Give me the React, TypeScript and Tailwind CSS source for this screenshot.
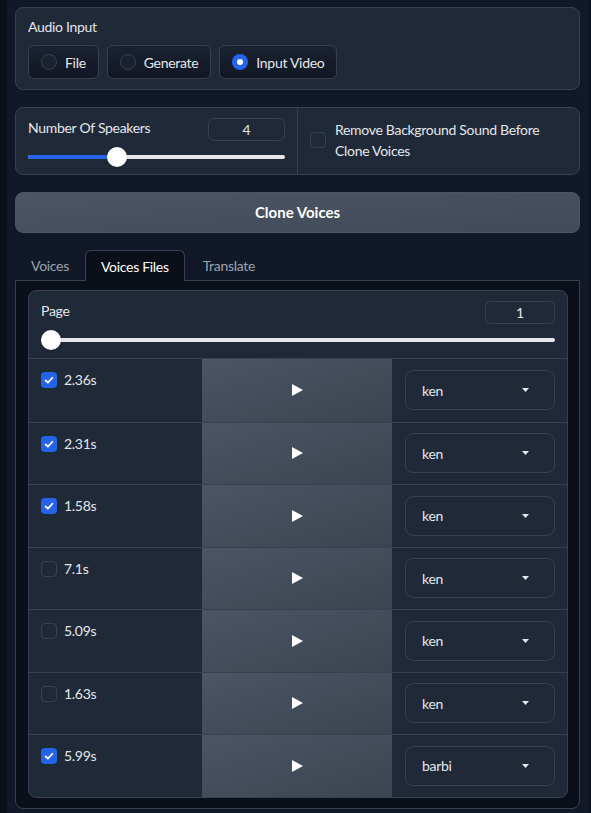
import React from 'react';

const rows = [
  { time: '2.36s', checked: true, voice: 'ken' },
  { time: '2.31s', checked: true, voice: 'ken' },
  { time: '1.58s', checked: true, voice: 'ken' },
  { time: '7.1s', checked: false, voice: 'ken' },
  { time: '5.09s', checked: false, voice: 'ken' },
  { time: '1.63s', checked: false, voice: 'ken' },
  { time: '5.99s', checked: true, voice: 'barbi' },
];

const Checkbox = ({ checked }: { checked: boolean }) =>
  checked ? (
    <span className="flex h-4 w-4 shrink-0 items-center justify-center rounded-[4px] bg-[#2563eb]">
      <svg width="12" height="12" viewBox="0 0 16 16" fill="none" stroke="white" strokeWidth="2.4" strokeLinecap="round" strokeLinejoin="round">
        <path d="M3.5 8.5l3 3 6-6.5" />
      </svg>
    </span>
  ) : (
    <span className="block h-4 w-4 shrink-0 rounded-[4px] border border-[#374151] bg-[#1f2937]" />
  );

const Radio = ({ label, checked }: { label: string; checked?: boolean }) => (
  <div className="flex h-[34px] items-center gap-2 rounded-md border border-[#374151] bg-linear-to-b from-[#1a2130] to-[#111723] pl-3 pr-3 text-[14px] text-[#e5e7eb]">
    {checked ? (
      <span className="flex h-4 w-4 items-center justify-center rounded-full bg-[#2563eb]">
        <span className="h-[6px] w-[6px] rounded-full bg-white" />
      </span>
    ) : (
      <span className="h-4 w-4 rounded-full border border-[#374151] bg-[#1a2130]" />
    )}
    <span>{label}</span>
  </div>
);

const Slider = ({ pos }: { pos: number }) => (
  <div className="relative h-5">
    <div className="absolute left-0 right-0 top-[8px] h-1 rounded-full bg-[#e5e7eb]" />
    <div className="absolute left-0 top-[8px] h-1 rounded-full bg-[#2563eb]" style={{ width: pos }} />
    <div className="absolute top-0 h-5 w-5 rounded-full bg-white shadow" style={{ left: pos - 10 }} />
  </div>
);

export default function App() {
  return (
    <div className="min-h-screen bg-[#0b0f19] pl-[7px] font-['Lato','Noto_Sans',sans-serif] tracking-[-0.3px]">
      <div className="flex min-h-[813px] w-[582px] flex-col gap-[17px] bg-[#111827] pl-2 pr-[9px] pt-[7px]">
        {/* audio input */}
        <div className="rounded-lg border border-[#374151] bg-[#1f2937] px-3 pb-[10px] pt-[9px]">
          <div className="mb-2 text-[14px] leading-5 text-[#e5e7eb]">Audio Input</div>
          <div className="flex gap-2">
            <Radio label="File" />
            <Radio label="Generate" />
            <Radio label="Input Video" checked />
          </div>
        </div>

        {/* speakers */}
        <div className="flex h-[68px] rounded-lg border border-[#374151] bg-[#1f2937]">
          <div className="w-[282px] border-r border-[#374151] px-3 pt-[10px]">
            <div className="flex items-start justify-between">
              <span className="text-[14px] leading-5 text-[#e5e7eb]">Number Of Speakers</span>
              <div className="flex h-[23px] w-[77px] items-center justify-center rounded-md border border-[#374151] bg-[#1f2937] text-[14px] text-[#e5e7eb]">
                4
              </div>
            </div>
            <div className="mt-[6px]">
              <Slider pos={89} />
            </div>
          </div>
          <div className="flex flex-1 items-center gap-[9px] px-3 pb-[3px]">
            <Checkbox checked={false} />
            <span className="text-[14px] leading-[21px] text-[#e5e7eb]">
              Remove Background Sound Before
              <br />
              Clone Voices
            </span>
          </div>
        </div>

        {/* clone button */}
        <button className="h-[41px] rounded-lg border border-[#4b5563] bg-linear-to-br from-[#4b5563] to-[#414a58] text-[15px] font-bold tracking-normal text-white">
          Clone Voices
        </button>

        {/* tabs */}
        <div>
          <div className="flex h-[30px] items-start text-[14px]">
            <div className="flex h-[31px] items-center border border-transparent px-[15px] text-[#9ca3af]">Voices</div>
            <div className="relative z-10 flex h-[31px] items-center rounded-t-md border border-b-0 border-[#374151] bg-[#0b0f19] px-[15px] text-white">
              Voices Files
            </div>
            <div className="flex h-[31px] items-center border border-transparent px-[17px] text-[#9ca3af]">Translate</div>
          </div>
          <div className="rounded-b-lg border border-[#374151] bg-[#0b0f19] pb-[10px] pl-3 pr-[11px] pt-[9px]">
            <div className="overflow-hidden rounded-lg border border-[#374151] bg-[#1f2937]">
              <div className="border-b border-[#374151] px-3 pb-[8px] pt-[10px]">
                <div className="flex items-start justify-between">
                  <span className="text-[14px] leading-5 text-[#e5e7eb]">Page</span>
                  <div className="flex h-[23px] w-[70px] items-center justify-center rounded-md border border-[#374151] bg-[#1f2937] text-[14px] text-[#e5e7eb]">
                    1
                  </div>
                </div>
                <div className="mt-[6px]">
                  <Slider pos={10} />
                </div>
              </div>
              {rows.map((r, i) => (
                <div key={i} className={`flex h-[62.5px] ${i > 0 ? 'border-t border-[#374151]' : ''}`}>
                  <div className="flex w-[173px] items-start gap-[7px] pl-3 pt-[11px]">
                    <span className="mt-[2px] block">
                      <Checkbox checked={r.checked} />
                    </span>
                    <span className="text-[14px] leading-5 text-[#e5e7eb]">{r.time}</span>
                  </div>
                  <div className="flex w-[190px] items-center justify-center bg-linear-to-br from-[#4b5563] to-[#3c4451]">
                    <svg width="11" height="12" viewBox="0 0 11 12">
                      <path d="M0 0L11 6L0 12Z" fill="white" />
                    </svg>
                  </div>
                  <div className="flex flex-1 items-center pl-[13px] pr-3">
                    <div className="flex h-10 w-full items-center justify-between rounded-lg border border-[#374151] bg-[#1f2937] pl-4 pr-[25px] text-[14px] text-[#e5e7eb]">
                      <span>{r.voice}</span>
                      <svg width="7" height="4" viewBox="0 0 7 4">
                        <path d="M0 0H7L3.5 4Z" fill="#e5e7eb" />
                      </svg>
                    </div>
                  </div>
                </div>
              ))}
            </div>
          </div>
        </div>
      </div>
    </div>
  );
}
